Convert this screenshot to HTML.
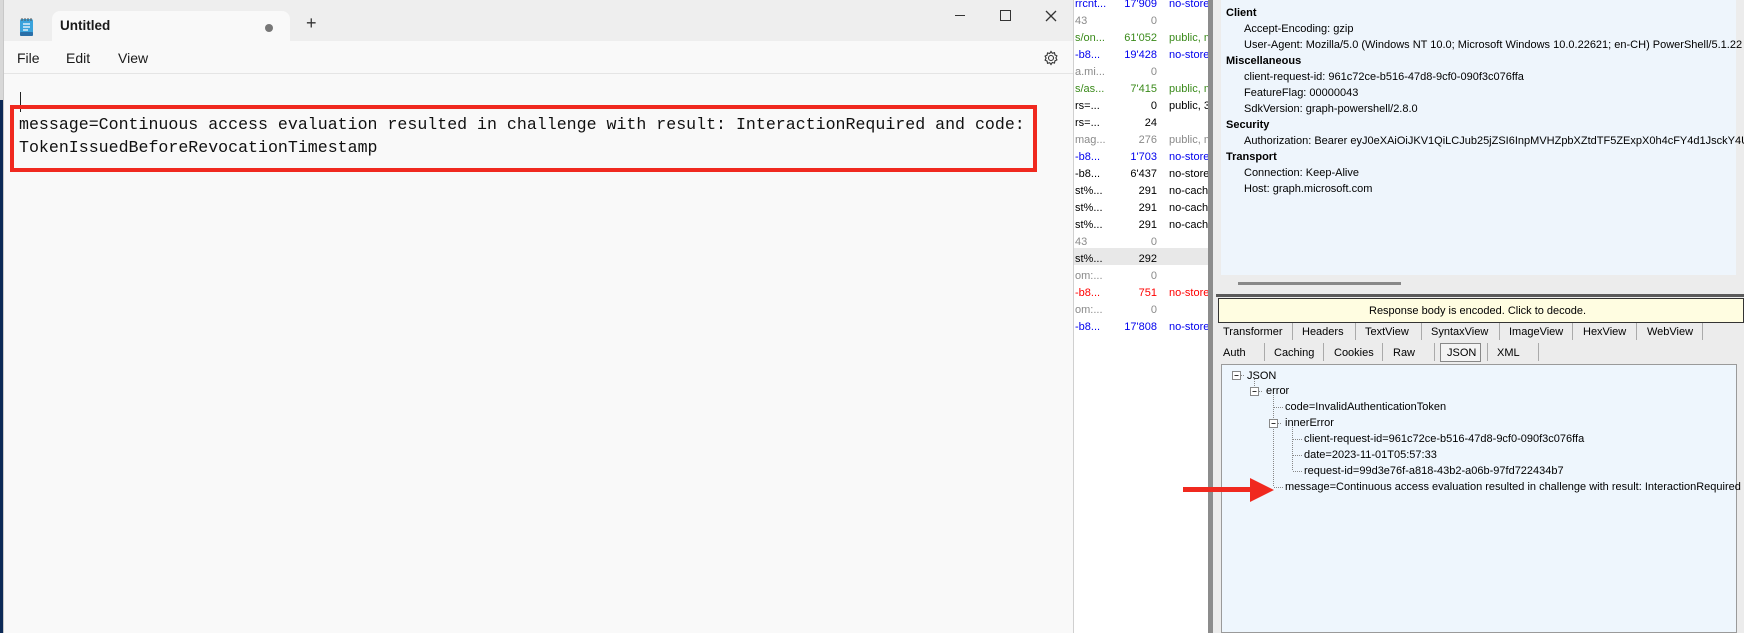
<!DOCTYPE html>
<html><head><meta charset="utf-8"><style>
*{margin:0;padding:0;box-sizing:border-box}
body{width:1744px;height:633px;overflow:hidden;background:#fff;position:relative;font-family:"Liberation Sans",sans-serif}
.a{position:absolute;white-space:nowrap}
.f{font-size:11px;line-height:14px;color:#000}
.r{text-align:right}
.b{color:#0000ee}.g{color:#3a8a1a}.gr{color:#8a8a8a}.rd{color:#ff0000}
</style></head><body>
<div class="a" style="left:0;top:0;width:4px;height:633px;background:#d8d8d8"></div>
<div class="a" style="left:0;top:100px;width:4px;height:533px;background:#0d2a57"></div>
<div class="a" style="left:3px;top:0;width:1071px;height:633px;background:#f9f9f9;border-left:1px solid #c8c8c8;border-right:1px solid #d0d0d0"></div>
<div class="a" style="left:4px;top:0;width:1069px;height:41px;background:#eeeeee"></div>
<div class="a" style="left:52px;top:11px;width:238px;height:31px;background:#f9f9f9;border-radius:8px 8px 0 0"></div>
<svg class="a" style="left:19px;top:17px" width="15" height="20" viewBox="0 0 15 20"><rect x="1" y="2" width="13" height="17" rx="2" fill="#3aa3dc"/><rect x="1" y="15" width="13" height="4" rx="1" fill="#2a6fa8"/><path d="M4 7h7M4 10h7M4 13h5" stroke="#fff" stroke-width="1.2"/><path d="M3 1v3M6 1v3M9 1v3M12 1v3" stroke="#555" stroke-width="1"/></svg>
<div class="a" style="left:60px;top:18px;font-size:13.5px;font-weight:bold;color:#1a1a1a">Untitled</div>
<div class="a" style="left:265px;top:24px;width:8px;height:8px;border-radius:50%;background:#777"></div>
<div class="a" style="left:306px;top:13px;font-size:18px;color:#333">+</div>
<div class="a" style="left:955px;top:15px;width:10px;height:1px;background:#333"></div>
<div class="a" style="left:1000px;top:10px;width:11px;height:11px;border:1.3px solid #333"></div>
<svg class="a" style="left:1045px;top:10px" width="12" height="12"><path d="M1 1L11 11M11 1L1 11" stroke="#333" stroke-width="1.3"/></svg>
<div class="a" style="left:17px;top:50px;font-size:14px;color:#1a1a1a">File</div>
<div class="a" style="left:66px;top:50px;font-size:14px;color:#1a1a1a">Edit</div>
<div class="a" style="left:118px;top:50px;font-size:14px;color:#1a1a1a">View</div>
<svg class="a" style="left:1043px;top:50px" width="16" height="16" viewBox="0 0 16 16"><circle cx="8" cy="8" r="2.5" fill="none" stroke="#333" stroke-width="1.1"/><path d="M8 1.5l1.3 1.8 2.2-.6.4 2.2 2 1-1 2 1 2-2 1-.4 2.2-2.2-.6L8 14.5l-1.3-1.8-2.2.6-.4-2.2-2-1 1-2-1-2 2-1 .4-2.2 2.2.6z" fill="none" stroke="#333" stroke-width="1.1"/></svg>
<div class="a" style="left:4px;top:73px;width:1069px;height:1px;background:#e5e5e5"></div>
<div class="a" style="left:20px;top:92px;width:1px;height:20px;background:#222"></div>
<div class="a" style="left:10px;top:105px;width:1027px;height:67px;border:4px solid #f0291f"></div>
<div class="a" style="left:19px;top:113px;font-family:'Liberation Mono',monospace;font-size:16.6px;line-height:23px;color:#111">message=Continuous access evaluation resulted in challenge with result: InteractionRequired and code:<br>TokenIssuedBeforeRevocationTimestamp</div>
<div class="a" style="left:1074px;top:248px;width:134px;height:17px;background:#e8e8e8"></div>
<div class="a f" style="left:1075px;top:-4px;line-height:17px">
<div class="b">rrcnt...</div><div class="gr">43</div><div class="g">s/on...</div><div class="b">-b8...</div><div class="gr">a.mi...</div><div class="g">s/as...</div><div>rs=...</div><div>rs=...</div><div class="gr">mag...</div><div class="b">-b8...</div><div>-b8...</div><div>st%...</div><div>st%...</div><div>st%...</div><div class="gr">43</div><div>st%...</div><div class="gr">om:...</div><div class="rd">-b8...</div><div class="gr">om:...</div><div class="b">-b8...</div></div>
<div class="a f r" style="left:1110px;width:47px;top:-4px;line-height:17px">
<div class="b">17'909</div><div class="gr">0</div><div class="g">61'052</div><div class="b">19'428</div><div class="gr">0</div><div class="g">7'415</div><div>0</div><div>24</div><div class="gr">276</div><div class="b">1'703</div><div>6'437</div><div>291</div><div>291</div><div>291</div><div class="gr">0</div><div>292</div><div class="gr">0</div><div class="rd">751</div><div class="gr">0</div><div class="b">17'808</div></div>
<div class="a f" style="left:1169px;width:39px;overflow:hidden;top:-4px;line-height:17px">
<div class="b">no-store</div><div>&nbsp;</div><div class="g">public, m</div><div class="b">no-store</div><div>&nbsp;</div><div class="g">public, m</div><div>public, 3</div><div>&nbsp;</div><div class="gr">public, m</div><div class="b">no-store</div><div>no-store</div><div>no-cache</div><div>no-cache</div><div>no-cache</div><div>&nbsp;</div><div>&nbsp;</div><div>&nbsp;</div><div class="rd">no-store</div><div>&nbsp;</div><div class="b">no-store</div></div>
<div class="a" style="left:1208px;top:0;width:5px;height:633px;background:#8c8c8c"></div>
<div class="a" style="left:1213px;top:0;width:531px;height:633px;background:#ececec"></div>
<div class="a" style="left:1221px;top:0;width:515px;height:275px;background:#eef5fc"></div>
<div class="a f" style="left:1226px;top:5px;line-height:16px">
<div style="font-weight:bold">Client</div>
<div style="padding-left:18px">Accept-Encoding: gzip</div>
<div style="padding-left:18px">User-Agent: Mozilla/5.0 (Windows NT 10.0; Microsoft Windows 10.0.22621; en-CH) PowerShell/5.1.22</div>
<div style="font-weight:bold">Miscellaneous</div>
<div style="padding-left:18px">client-request-id: 961c72ce-b516-47d8-9cf0-090f3c076ffa</div>
<div style="padding-left:18px">FeatureFlag: 00000043</div>
<div style="padding-left:18px">SdkVersion: graph-powershell/2.8.0</div>
<div style="font-weight:bold">Security</div>
<div style="padding-left:18px">Authorization: Bearer eyJ0eXAiOiJKV1QiLCJub25jZSI6InpMVHZpbXZtdTF5ZExpX0h4cFY4d1JsckY4UHEz</div>
<div style="font-weight:bold">Transport</div>
<div style="padding-left:18px">Connection: Keep-Alive</div>
<div style="padding-left:18px">Host: graph.microsoft.com</div></div>
<div class="a" style="left:1238px;top:282px;width:163px;height:3px;background:#888"></div>
<div class="a" style="left:1216px;top:294px;width:528px;height:3px;background:#5a5a5a"></div>
<div class="a" style="left:1218px;top:298px;width:526px;height:25px;background:#fffde1;border:1px solid #333"></div>
<div class="a f" style="left:1369px;top:304px">Response body is encoded. Click to decode.</div>
<div class="a f" style="left:1223px;top:325px">Transformer</div>
<div class="a f" style="left:1302px;top:325px">Headers</div>
<div class="a f" style="left:1365px;top:325px">TextView</div>
<div class="a f" style="left:1431px;top:325px">SyntaxView</div>
<div class="a f" style="left:1509px;top:325px">ImageView</div>
<div class="a f" style="left:1583px;top:325px">HexView</div>
<div class="a f" style="left:1647px;top:325px">WebView</div>
<div class="a f" style="left:1223px;top:346px">Auth</div>
<div class="a f" style="left:1274px;top:346px">Caching</div>
<div class="a f" style="left:1334px;top:346px">Cookies</div>
<div class="a f" style="left:1393px;top:346px">Raw</div>
<div class="a" style="left:1440px;top:343px;width:41px;height:19px;border:1px solid #888;background:#f4f4f4"></div>
<div class="a f" style="left:1447px;top:346px">JSON</div>
<div class="a f" style="left:1497px;top:346px">XML</div>
<div class="a" style="left:1292px;top:323px;width:1px;height:17px;background:#aaa"></div>
<div class="a" style="left:1355px;top:323px;width:1px;height:17px;background:#aaa"></div>
<div class="a" style="left:1421px;top:323px;width:1px;height:17px;background:#aaa"></div>
<div class="a" style="left:1499px;top:323px;width:1px;height:17px;background:#aaa"></div>
<div class="a" style="left:1572px;top:323px;width:1px;height:17px;background:#aaa"></div>
<div class="a" style="left:1636px;top:323px;width:1px;height:17px;background:#aaa"></div>
<div class="a" style="left:1702px;top:323px;width:1px;height:17px;background:#aaa"></div>
<div class="a" style="left:1264px;top:343px;width:1px;height:18px;background:#aaa"></div>
<div class="a" style="left:1323px;top:343px;width:1px;height:18px;background:#aaa"></div>
<div class="a" style="left:1382px;top:343px;width:1px;height:18px;background:#aaa"></div>
<div class="a" style="left:1434px;top:343px;width:1px;height:18px;background:#aaa"></div>
<div class="a" style="left:1487px;top:343px;width:1px;height:18px;background:#aaa"></div>
<div class="a" style="left:1538px;top:343px;width:1px;height:18px;background:#aaa"></div>
<div class="a" style="left:1221px;top:364px;width:516px;height:269px;background:#eef6fd;border:1px solid #9a9a9a"></div>
<svg class="a" style="left:1221px;top:364px" width="516" height="269">
<g fill="none" stroke="#888" stroke-dasharray="1,1">
<path d="M20 11.5h4M33.5 15V23M38 27.5h4M52.5 31V55M52.5 63V123M53 43.5h9M57 59.5h4M71.5 63V107M72 75.5h9M72 91.5h9M72 107.5h9M53 123.5h9"/>
</g>
<g fill="#fff" stroke="#888"><rect x="11.5" y="7.5" width="8" height="8"/><rect x="29.5" y="23.5" width="8" height="8"/><rect x="48.5" y="55.5" width="8" height="8"/></g>
<path d="M13.5 11.5h4M31.5 27.5h4M50.5 59.5h4" stroke="#333"/>
</svg>
<div class="a f" style="left:1247px;top:368px;line-height:16px">JSON</div>
<div class="a f" style="left:1266px;top:384px">error</div>
<div class="a f" style="left:1285px;top:400px">code=InvalidAuthenticationToken</div>
<div class="a f" style="left:1285px;top:416px">innerError</div>
<div class="a f" style="left:1304px;top:432px">client-request-id=961c72ce-b516-47d8-9cf0-090f3c076ffa</div>
<div class="a f" style="left:1304px;top:448px">date=2023-11-01T05:57:33</div>
<div class="a f" style="left:1304px;top:464px">request-id=99d3e76f-a818-43b2-a06b-97fd722434b7</div>
<div class="a f" style="left:1285px;top:480px">message=Continuous access evaluation resulted in challenge with result: InteractionRequired</div>
<div class="a" style="left:1183px;top:487px;width:70px;height:5px;background:#f0291f"></div>
<svg class="a" style="left:1250px;top:478px" width="25" height="25"><path d="M0 0L24 12L0 24z" fill="#f0291f"/></svg>
</body></html>
